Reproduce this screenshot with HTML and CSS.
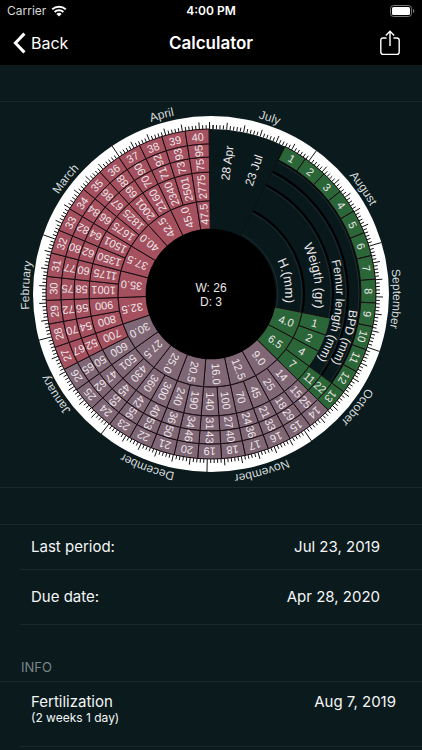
FILE: index.html
```html
<!DOCTYPE html>
<html lang="en">
<head>
<meta charset="utf-8">
<meta name="viewport" content="width=device-width, initial-scale=1">
<title>Calculator</title>
<link rel="stylesheet" href="styles.css">
</head>
<body>
<header class="top">
  <div class="status">
    <div class="status-left">
      <span>Carrier</span>
      <svg class="wifi" viewBox="0 0 16 12" aria-hidden="true">
        <path d="M1.2 4.4a9.8 9.8 0 0 1 13.6 0M3.6 7a6.4 6.4 0 0 1 8.8 0" fill="none" stroke="#fff" stroke-width="2"/>
        <path d="M8 11.6 5.4 9a3.8 3.8 0 0 1 5.2 0z" fill="#fff"/>
      </svg>
    </div>
    <span class="clock">4:00 PM</span>
    <div class="status-right">
      <svg class="battery" viewBox="0 0 25 12" aria-hidden="true">
        <rect x=".5" y=".5" width="21" height="11" rx="3" fill="none" stroke="#777"/>
        <rect x="2" y="2" width="18" height="8" rx="1.6" fill="#fff"/>
        <path d="M23 4v4q1.4-.6 1.4-2T23 4z" fill="#777"/>
      </svg>
    </div>
  </div>
  <nav class="nav">
    <a class="back" href="#">
      <svg class="chevron" viewBox="0 0 13 22" aria-hidden="true"><path d="M11.4 1.6 2.4 11l9 9.4" fill="none" stroke="#fff" stroke-width="3"/></svg>
      <span>Back</span>
    </a>
    <h1 class="title">Calculator</h1>
    <button class="share" type="button" aria-label="Share">
      <svg viewBox="0 0 20 26" aria-hidden="true"><path d="M6.5 8H3.2Q.8 8 .8 10.400V22q0 2.400 2.400 2.400h13.600q2.400 0 2.400-2.400V10.400Q19.200 8 16.800 8H13.500M10 16V1.600M5.800 5.500 10 1.300l4.200 4.200" fill="none" stroke="#fff" stroke-width="1.400"/></svg>
    </button>
  </nav>
</header>
<main>
  <section class="wheel-panel">
    <svg id="wheel" class="wheel" viewBox="0 102 422 385" role="img" aria-label="Pregnancy wheel"></svg>
  </section>
  <dl class="rows">
    <div class="row"><dt>Last period:</dt><dd>Jul 23, 2019</dd></div>
    <div class="row row-tall"><dt>Due date:</dt><dd>Apr 28, 2020</dd></div>
  </dl>
  <h2 class="heading">INFO</h2>
  <dl class="rows info">
    <div class="row row-info"><dt>Fertilization<small>(2 weeks 1 day)</small></dt><dd>Aug 7, 2019</dd></div>
  </dl>
</main>
<script src="wheel.js"></script>
</body>
</html>
```
FILE: styles.css
```css
* { box-sizing: border-box; }
body {
  margin: 0;
  background: #0a1a1d;
  color: #f4f6f6;
  font-family: Inter, "Liberation Sans", sans-serif;
}
.top { background: #000; color: #fff; }
.status {
  display: grid;
  grid-template-columns: 1fr auto 1fr;
  align-items: center;
  height: 21px;
  padding: 0 7px;
  font-size: 12px;
}
.status-left { display: flex; align-items: center; gap: 5px; color: #d8d8d8; }
.status-right { display: flex; justify-content: flex-end; }
.clock { font-weight: 600; }
.wifi { width: 16px; height: 12px; }
.battery { width: 25px; height: 12px; }
.nav {
  display: grid;
  grid-template-columns: 1fr auto 1fr;
  align-items: center;
  height: 44px;
  padding: 0 13px;
}
.back {
  display: flex;
  align-items: center;
  gap: 5px;
  color: #fff;
  font-size: 16px;
  text-decoration: none;
}
.chevron { width: 13px; height: 22px; }
.title { margin: 0; font-size: 17px; font-weight: 600; }
.share {
  justify-self: end;
  width: 20px;
  height: 26px;
  margin-right: 9px;
  padding: 0;
  border: 0;
  background: none;
}
.share svg { display: block; width: 20px; height: 26px; }
.wheel-panel {
  margin: 36px 0;
  border: solid #1a292c;
  border-width: 1px 0;
}
.wheel { display: block; width: 100%; font-family: "Liberation Sans", sans-serif; }
.wheel text { fill: #ece6e8; text-anchor: middle; }
.wheel .cell-text { font-size: 11px; }
.wheel .date-text { font-size: 12px; }
.wheel .arc-text { font-size: 13px; }
.wheel .arc-text-small { font-size: 12px; }
.wheel .month-text { font-size: 12px; fill: #d3d8d9; }
.red { fill: #a4505f; }
.purple { fill: #806776; }
.green { fill: #2a6637; }
.dark { fill: #08181b; }
.cell { stroke: #1a0e12; stroke-width: 1; }
.rim { fill: #fff; }
.hub { fill: #000; }
.tick { stroke: #111; stroke-width: 1; }
.groove { fill: none; stroke: #000; stroke-width: 2; }
.groove-light { fill: none; stroke: #1d2c30; stroke-width: 1; }
.rows { margin: 0; border-top: 1px solid #1a292c; }
.row {
  display: flex;
  justify-content: space-between;
  align-items: center;
  height: 45px;
  margin-left: 20px;
  padding: 0 42px 1px 11px;
  border-bottom: 1px solid #1a292c;
  font-size: 15px;
}
.row-tall { height: 55px; }
.row-info { height: 65px; padding: 10px 26px 0 11px; align-items: flex-start; }
.row dd { margin: 0; }
.row small { display: block; font-size: 12px; line-height: 14px; }
.heading {
  margin: 34px 0 0;
  padding: 0 21px 6px;
  color: #7c868a;
  font-size: 13px;
  font-weight: 400;
  line-height: 16px;
}
```
FILE: wheel.js
```js
const NS = "http://www.w3.org/2000/svg";
const svg = document.getElementById("wheel");
const CX = 211, CY = 294;
const START = 26.6;              // angle of the last period
const WEEK = 332.7 / 40;         // degrees in one week
const DAY = WEEK / 7;
const R = { hub: 65, height: 93, weight: 122, femur: 137, bpd: 150, week: 165, rim: 178 };

function add(name, attrs, text) {
  const el = document.createElementNS(NS, name);
  for (const key in attrs) el.setAttribute(key, attrs[key]);
  if (text !== undefined) el.textContent = text;
  svg.appendChild(el);
  return el;
}
function pt(r, deg) {
  const a = deg * Math.PI / 180;
  return (CX + r * Math.sin(a)).toFixed(2) + " " + (CY - r * Math.cos(a)).toFixed(2);
}
function arc(r, a, b) {
  return `M${pt(r, a)}A${r} ${r} 0 ${b - a > 180 ? 1 : 0} 1 ${pt(r, b)}`;
}
function cell(r1, r2, a, b, cls) {
  add("path", {
    d: `M${pt(r1, a)}L${pt(r2, a)}A${r2} ${r2} 0 0 1 ${pt(r2, b)}L${pt(r1, b)}A${r1} ${r1} 0 0 0 ${pt(r1, a)}Z`,
    class: "cell " + cls
  });
}
function line(r1, r2, a, cls) {
  add("path", { d: `M${pt(r1, a)}L${pt(r2, a)}`, class: cls });
}
function label(text, r, deg, turn, cls) {
  add("text", { transform: `translate(${pt(r, deg)}) rotate(${(deg + turn).toFixed(2)})`, dy: "0.36em", class: cls }, text);
}
let arcId = 0;
function curved(text, r, mid, cls) {
  const id = "arc" + arcId++;
  add("path", { id, d: arc(r, mid - 40, mid + 40), fill: "none" });
  const t = add("text", { class: cls });
  const p = document.createElementNS(NS, "textPath");
  p.setAttribute("href", "#" + id);
  p.setAttribute("startOffset", "50%");
  p.textContent = text;
  t.appendChild(p);
}

add("circle", { cx: CX, cy: CY, r: R.rim, class: "rim" });
add("circle", { cx: CX, cy: CY, r: R.week, class: "dark" });

// Calendar scale: one tick a day, a longer one each fifth day, a full one at each month
const months = [["July", 31], ["August", 31], ["September", 30], ["October", 31], ["November", 30],
  ["December", 31], ["January", 31], ["February", 29], ["March", 31], ["April", 30]];
let angle = -0.5;
months.forEach(([name, days], m) => {
  for (let d = 0; d < days; d++) {
    const first = d === 0 && m > 0;
    const long = d % 5 === 0 && d < 30;
    line(R.week, first ? R.rim : long ? 172 : 169, angle + d * DAY, "tick");
  }
  curved(name, 182, angle + days * DAY / 2 + 0.5, "month-text");
  angle += days * DAY;
});

// Engraved rings of the empty weeks
[[R.height, 9], [R.weight, 9], [R.femur, 12], [R.bpd, 12]].forEach(([r, weeks]) => {
  add("path", { d: arc(r, START, START + weeks * WEEK), class: "groove" });
  add("path", { d: arc(r - 2, START, START + weeks * WEEK), class: "groove-light" });
});
add("path", { d: arc(R.hub + 2, START, START + 9 * WEEK), class: "groove-light" });

// week: [weight, femur, BPD]
const data = {
  10: [1], 11: [2], 12: [4], 13: [7, 11, 22], 14: [14, 15, 25], 15: [25, 18, 29], 16: [45, 21, 33],
  17: [70, 24, 36], 18: [100, 27, 40], 19: [140, 31, 43], 20: [190, 34, 46], 21: [240, 36, 50],
  22: [300, 40, 53], 23: [360, 42, 56], 24: [430, 45, 59], 25: [501, 47, 62], 26: [600, 50, 65],
  27: [700, 52, 67], 28: [800, 54, 70], 29: [900, 56, 72], 30: [1001, 58, 75], 31: [1175, 60, 77],
  32: [1350, 62, 80], 33: [1501, 64, 82], 34: [1675, 66, 84], 35: [1825, 67, 86], 36: [2001, 69, 88],
  37: [2160, 70, 90], 38: [2340, 71, 92], 39: [2501, 73, 93], 40: [2775, 75, 95]
};
const rings = [[R.height, R.weight], [R.weight, R.femur], [R.femur, R.bpd]];
const tone = w => w < 14 ? "green" : w < 27 ? "purple" : "red";
for (let w = 1; w <= 40; w++) {
  const a = START + (w - 1) * WEEK, mid = a + WEEK / 2;
  cell(R.bpd, R.week, a, a + WEEK, tone(w));
  label(w, (R.bpd + R.week) / 2, mid, 0, "cell-text");
  (data[w] || []).forEach((value, i) => {
    const [r1, r2] = rings[i];
    cell(r1, r2, a, a + WEEK, tone(w));
    label(value, (r1 + r2) / 2, mid, -90, "cell-text");
  });
}

// Fundal height: each value covers two weeks, the last one only one
["4.0", "6.5", "9.0", "12.5", "16.0", "20.5", "25.0", "27.5", "30.0", "32.5", "35.0", "37.5", "40.0", "42.5", "45.0", "47.5"]
  .forEach((value, i) => {
    const w = 10 + i * 2, span = w === 40 ? 1 : 2;
    const a = START + (w - 1) * WEEK, b = a + span * WEEK;
    cell(R.hub, R.height, a, b, tone(w));
    label(value, 80, (a + b) / 2, -90, "cell-text");
  });

line(R.hub, R.week, START, "tick");
curved("H.(mm)", 74, 80, "arc-text");
curved("Weigth (gr)", 104, 80, "arc-text");
curved("Femur length (mm)", 125, 98, "arc-text-small");
curved("BPD (mm)", 139, 108, "arc-text-small");
label("28 Apr", 132, 7, -90, "date-text");
label("23 Jul", 131, 19, -90, "date-text");

add("circle", { cx: CX, cy: CY, r: R.hub, class: "hub" });
add("text", { x: CX, y: 292, class: "date-text" }, "W: 26");
add("text", { x: CX, y: 306, class: "date-text" }, "D: 3");
```
